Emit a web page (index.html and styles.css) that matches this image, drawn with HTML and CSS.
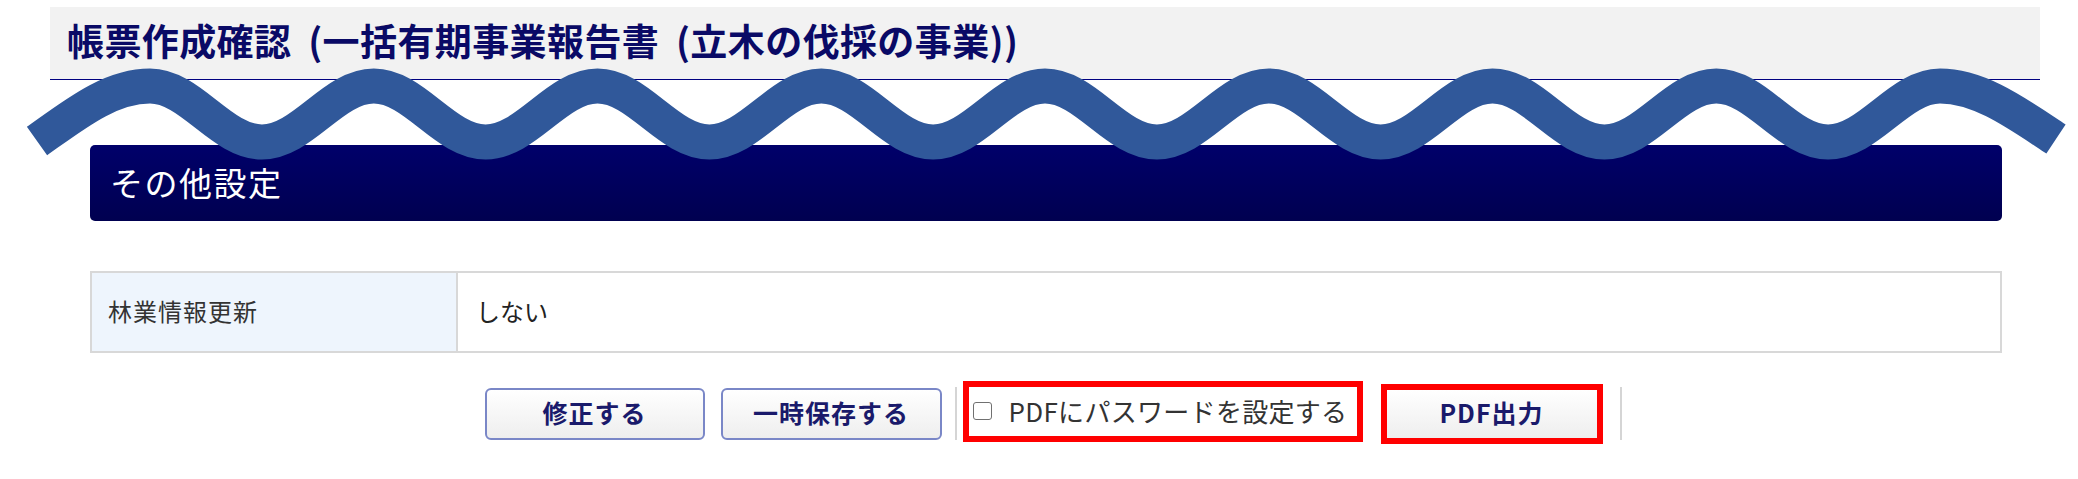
FILE: index.html
```html
<!DOCTYPE html>
<html lang="ja">
<head>
<meta charset="utf-8">
<title>帳票作成確認</title>
<link rel="stylesheet" href="styles.css">
</head>
<body>
<svg class="wave" viewBox="0 0 2078 200" width="2078" height="200" aria-hidden="true">
  <path d="M37,141 C75,114 110,86 150,86
           C190.7,86 221.2,142 261.9,142
           C302.6,142 333,86 373.8,86
           C414.5,86 444.9,142 485.6,142
           C526.3,142 556.8,86 597.5,86
           C638.2,86 668.7,142 709.4,142
           C750.1,142 780.5,86 821.3,86
           C862,86 892.4,142 933.1,142
           C973.8,142 1004.3,86 1045,86
           C1085.7,86 1116.2,142 1156.9,142
           C1197.6,142 1228,86 1268.8,86
           C1309.5,86 1339.9,142 1380.6,142
           C1421.3,142 1451.8,86 1492.5,86
           C1533.2,86 1563.7,142 1604.4,142
           C1645.1,142 1675.5,86 1716.3,86
           C1757,86 1787.4,142 1828.1,142
           C1868.8,142 1899.3,86 1940,86
           C1980,86 2018,114 2056,139"
        fill="none" stroke="#30589a" stroke-width="35" stroke-linecap="butt"/>
</svg>

<header class="page-header">
  <h1 class="page-title">帳票作成確認 (一括有期事業報告書 (立木の伐採の事業))</h1>
</header>

<main class="content">
  <h2 class="section-title">その他設定</h2>

  <table class="info-table">
    <tr>
      <th>林業情報更新</th>
      <td>しない</td>
    </tr>
  </table>

  <div class="actions">
    <button class="btn" type="button">修正する</button>
    <button class="btn btn-save" type="button">一時保存する</button>
    <span class="sep sep-first"></span>
    <label class="pw-option"><input class="pw-check" type="checkbox"><span>PDFにパスワードを設定する</span></label>
    <button class="btn btn-pdf" type="button">PDF出力</button>
    <span class="sep sep-last"></span>
  </div>
</main>
</body>
</html>
```

FILE: styles.css
```css
* {
  box-sizing: border-box;
}

body {
  margin: 0;
  position: relative;
  background: #ffffff;
  font-family: "Noto Sans CJK JP", "Noto Sans", sans-serif;
  color: #333333;
}

.wave {
  position: absolute;
  left: 0;
  top: 0;
  z-index: 10;
  pointer-events: none;
}

.page-header {
  margin: 7px 38px 0 50px;
  height: 73px;
  background: #f2f2f2;
  border-bottom: 1px solid #000080;
  display: flex;
  align-items: center;
  padding: 0 0 6px 17px;
}

.page-title {
  margin: 0;
  font-size: 37px;
  font-weight: 700;
  line-height: 1;
  color: #0a0a66;
  letter-spacing: 0.4px;
  word-spacing: 8px;
  white-space: nowrap;
}

.content {
  margin: 65px 76px 0 90px;
}

.section-title {
  margin: 0;
  height: 76px;
  border-radius: 5px;
  background: linear-gradient(#00006a, #000050);
  color: #ffffff;
  font-size: 33px;
  font-weight: 400;
  letter-spacing: 1.5px;
  display: flex;
  align-items: center;
  padding: 0 0 2px 20px;
}

.info-table {
  margin-top: 50px;
  width: 100%;
  border-collapse: collapse;
  height: 82px;
  font-size: 24px;
}

.info-table th,
.info-table td {
  border: 2px solid #d8d8d8;
  font-weight: 400;
  text-align: left;
  vertical-align: middle;
  padding: 0 0 4px 0;
}

.info-table th {
  width: 366px;
  background: #eef5fd;
  color: #333333;
  padding-left: 16px;
  letter-spacing: 1px;
}

.info-table td {
  padding-left: 18px;
  color: #222222;
  background: #ffffff;
}

.actions {
  display: flex;
  align-items: center;
  justify-content: center;
  margin-top: 28px;
  padding-left: 14px;
}

.btn {
  width: 220px;
  height: 52px;
  border: 2px solid #7a87c7;
  border-radius: 6px;
  background: linear-gradient(#ffffff, #eeeeee);
  color: #1a1a6b;
  font-family: "Noto Sans CJK JP", "Noto Sans", sans-serif;
  font-size: 25px;
  font-weight: 700;
  letter-spacing: 1px;
  padding: 0 0 3px 0;
  cursor: pointer;
}

.btn-save {
  margin-left: 16px;
  width: 221px;
}

.sep {
  width: 2px;
  height: 53px;
  background: #d5d5d5;
}

.sep-first {
  margin-left: 13px;
}

.sep-last {
  margin-left: 17px;
}

.pw-option {
  margin: 0 0 4px 6px;
  width: 400px;
  height: 61px;
  border: 6px solid #ff0000;
  display: flex;
  align-items: center;
  padding: 0 0 2px 4px;
  font-size: 26px;
  letter-spacing: 0.3px;
  color: #333333;
  white-space: nowrap;
}

.pw-check {
  appearance: none;
  -webkit-appearance: none;
  margin: 0 17px 0 0;
  width: 19px;
  height: 18px;
  border: 1.5px solid #707070;
  border-radius: 3px;
  background: #ffffff;
  flex: none;
}

.btn-pdf {
  margin-left: 18px;
  width: 222px;
  height: 60px;
  border: 6px solid #ff0000;
  border-radius: 0;
}
```
